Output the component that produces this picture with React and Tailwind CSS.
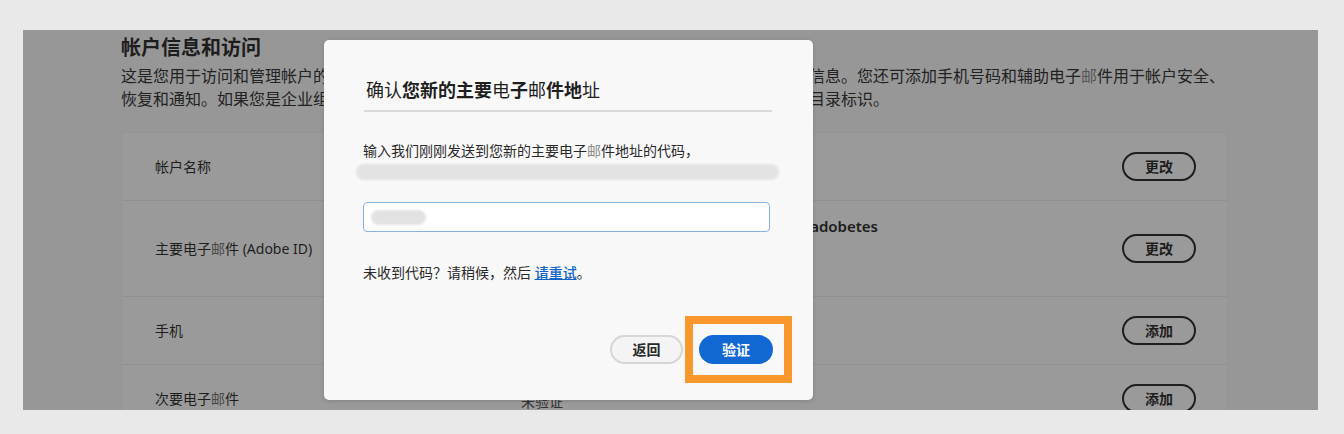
import React from "react";

const rows = [
  { label: "帐户名称", action: "更改", h: "h-[67px]" },
  {
    label: (
      <>
        主要电子<span className="text-[#4a4a4a]">邮</span>件 (Adobe ID)
      </>
    ),
    action: "更改",
    h: "h-[96px]",
    value: (
      <div className="self-start pt-[15px]">
        <span className="block w-[357px] whitespace-nowrap text-right text-[15px] font-semibold leading-[20px] text-[#1c1c1c]">
          account.owner@adobetes
        </span>
      </div>
    ),
  },
  { label: "手机", action: "添加", h: "h-[68px]" },
  {
    label: (
      <>
        次要电子<span className="text-[#4a4a4a]">邮</span>件
      </>
    ),
    action: "添加",
    h: "h-[68px]",
    value: (
      <div className="pt-[6px] text-[14px] leading-[20px] text-[#333]">
        未验证
      </div>
    ),
  },
];

function PillButton({ children }) {
  return (
    <button
      type="button"
      className="flex h-[29px] w-[74px] items-center justify-center rounded-full border-2 border-[#1e1e1e] text-[14px] font-bold text-[#1e1e1e]"
    >
      {children}
    </button>
  );
}

function AccountPage() {
  return (
    <div className="pl-[98px] pt-[4px] text-[#1d1d1d]">
      <h1 className="text-[20px] font-bold leading-[28px]">帐户信息和访问</h1>
      <div className="mt-[3px] whitespace-nowrap text-[16px] leading-[23px] text-[#222]">
        <div>
          这是您用于访问和管理帐户的电子邮件地址，以及与您的帐户相关联的姓名、出生日期和其他个人信息。您还可添加手机号码和辅助电子
          <span className="text-[#555]">邮</span>件用于帐户安全、
        </div>
        <div>
          恢复和通知。如果您是企业组织的成员，您的帐户可能由您的组织管理员管理，您还可以查看您的目录标识。
        </div>
      </div>

      <div className="mt-[21px] w-[1107px] border border-[#939393] bg-[#9a9a9a]">
        {rows.map((r, i) => (
          <div
            key={i}
            className={`flex items-center ${r.h} ${
              i > 0 ? "border-t border-[#909090]" : ""
            } pl-[33px] pr-[31px]`}
          >
            <div className="w-[366px] text-[14px] leading-[20px] text-[#1e1e1e]">
              {r.label}
            </div>
            {r.value || <div />}
            <div className="ml-auto">
              <PillButton>{r.action}</PillButton>
            </div>
          </div>
        ))}
      </div>
    </div>
  );
}

function ConfirmEmailModal() {
  return (
    <div className="absolute left-[301px] top-[10px] h-[360px] w-[489px] rounded-[5px] bg-[#f8f8f8] pl-[39px] pr-[21px] pt-[38px] shadow-[0_1px_4px_rgba(0,0,0,0.15)]">
      <h2 className="pl-[3px] text-[18px] leading-[24px] text-[#1f1f1f]">
        <span className="font-normal">确认</span>
        <span className="font-bold">您新的主要</span>
        <span className="font-normal">电</span>
        <span className="font-bold">子</span>
        <span className="font-normal">邮</span>
        <span className="font-bold">件地</span>
        <span className="font-normal">址</span>
      </h2>
      <div className="ml-[1px] mt-[8px] h-[2px] w-[408px] bg-[#dadada]" />

      <p className="mt-[29px] text-[14px] leading-[20px] text-[#2a2a2a]">
        输入我们刚刚发送到您新的主要电子<span className="text-[#8a8a8a]">邮</span>
        件地址的代码，
      </p>
      <div className="-ml-[7px] mt-[3px] h-[16px] w-[423px] rounded-full bg-[#e3e3e3] blur-[1px]" />

      <div className="mt-[22px] flex h-[30px] w-[407px] items-center rounded-[4px] border border-[#86b3e0] bg-white pl-[7px]">
        <div className="h-[15px] w-[55px] rounded-full bg-[#e2e2e2] blur-[1px]" />
      </div>

      <p className="mt-[31px] text-[14px] leading-[20px] text-[#2a2a2a]">
        未收到代码？请稍候，然后{" "}
        <a href="#" className="font-medium text-[#1165c9] underline">
          请重试
        </a>
        。
      </p>

      <div className="mt-[33px] flex items-center justify-end gap-[2px]">
        <button
          type="button"
          className="flex h-[29px] w-[73px] items-center justify-center rounded-full border-2 border-[#d6d6d6] bg-[#f4f4f4] text-[14px] font-bold text-[#2a2a2a]"
        >
          返回
        </button>
        <div className="border-[8px] border-[#f7972c] pb-[11px] pl-[6px] pr-[11px] pt-[11px]">
          <button
            type="button"
            className="flex h-[29px] w-[74px] items-center justify-center rounded-full bg-[#1268d3] text-[14px] font-bold text-white"
          >
            验证
          </button>
        </div>
      </div>
    </div>
  );
}

export default function App() {
  return (
    <div className="h-[434px] w-[1344px] bg-[#e9e9e9] pl-[23px] pt-[30px] font-['Noto_Sans','Noto_Sans_CJK_SC',sans-serif]">
      <div className="relative h-[380px] w-[1295px] overflow-hidden bg-[#979797]">
        <AccountPage />
        <ConfirmEmailModal />
      </div>
    </div>
  );
}
